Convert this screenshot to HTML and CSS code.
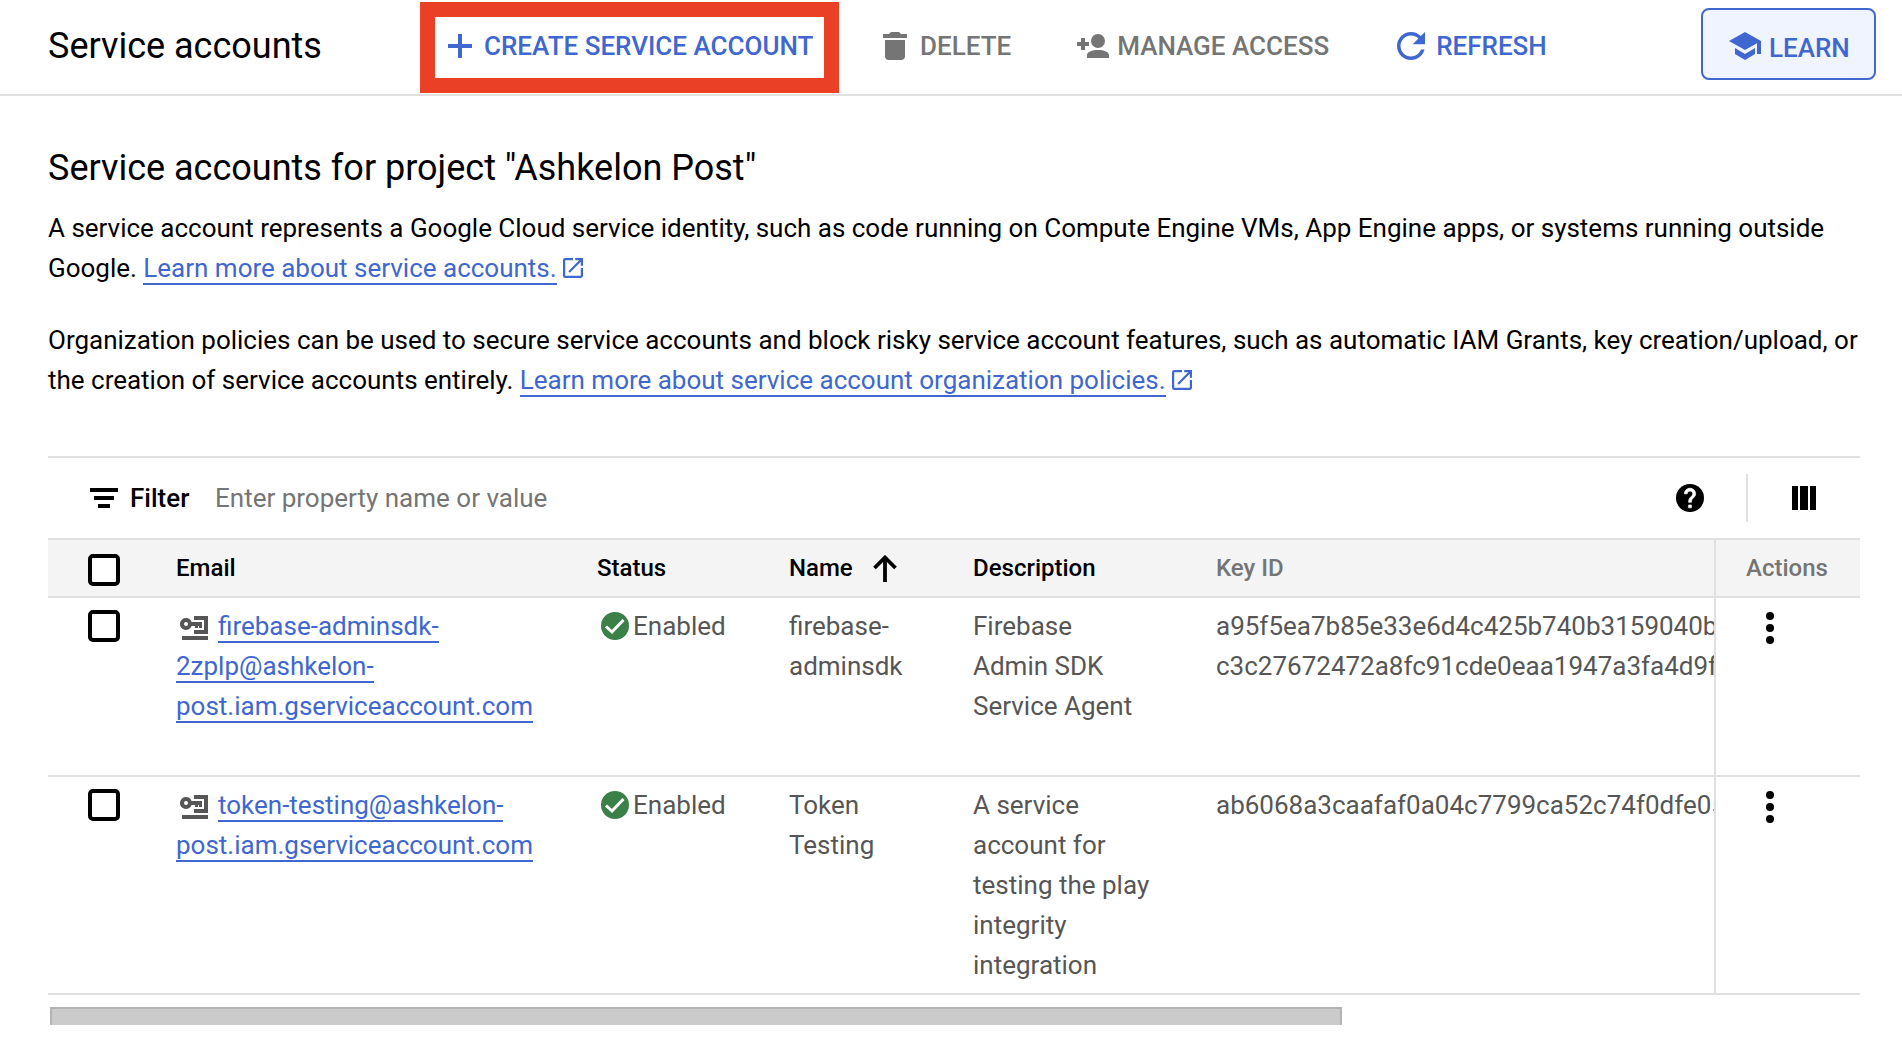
FILE: index.html
```html
<!DOCTYPE html>
<html lang="en">
<head>
<meta charset="utf-8">
<title>Service accounts</title>
<link rel="stylesheet" href="styles.css">
</head>
<body>
<svg class="defs" aria-hidden="true">
  <symbol id="open" viewBox="3 3 18 18"><path d="M19 19H5V5h7V3H5a2 2 0 0 0-2 2v14a2 2 0 0 0 2 2h14c1.100 0 2-.9 2-2v-7h-2v7zM14 3v2h3.590l-9.830 9.830 1.410 1.410L19 6.410V10h2V3h-7z"/></symbol>
  <symbol id="key" viewBox="0 0 28 24"><path d="M14 0h14v18H14v-4h10V4H14zM2 20h26v4H2z"/><path fill-rule="evenodd" d="M6 2a6 6 0 0 1 5.600 4H22v6h-3v-2h-1v2h-3v-2h-3.400A6 6 0 1 1 6 2zm0 4a2 2 0 1 0 0 4 2 2 0 0 0 0-4z"/></symbol>
  <symbol id="ok" viewBox="0 0 28 28"><circle cx="14" cy="14" r="14"/><path d="M5 14.500l6 5.500L22.500 8" fill="none" stroke="#fff" stroke-width="3"/></symbol>
  <symbol id="more" viewBox="0 0 8 32"><circle cx="4" cy="4" r="4"/><circle cx="4" cy="16" r="4"/><circle cx="4" cy="28" r="4"/></symbol>
</svg>

<header class="toolbar">
  <h1 class="title">Service accounts</h1>
  <button class="action create">
    <svg width="24" height="24" viewBox="0 0 24 24"><path d="M10 0h4v10h10v4H14v10h-4V14H0v-4h10z"/></svg>CREATE SERVICE ACCOUNT
  </button>
  <button class="action delete disabled">
    <svg width="24" height="28" viewBox="0 0 24 28"><path d="M0 2h6l2-2h8l2 2h6v4H0zM2 8h20v16a4 4 0 0 1-4 4H6a4 4 0 0 1-4-4z"/></svg>DELETE
  </button>
  <button class="action manage disabled">
    <svg width="32" height="24" viewBox="0 0 32 24"><path d="M4 4h4v4h4v4H8v4H4v-4H0V8h4zM10 24v-3c0-3 5-5 11-5s11 2 11 5v3z"/><circle cx="21" cy="7" r="7"/></svg>MANAGE ACCESS
  </button>
  <button class="action refresh">
    <svg width="28" height="28" viewBox="4 4 16 16"><path d="M17.650 6.350C16.200 4.900 14.210 4 12 4c-4.420 0-7.990 3.580-7.990 8s3.570 8 7.990 8c3.730 0 6.840-2.550 7.730-6h-2.080c-.82 2.330-3.040 4-5.650 4-3.310 0-6-2.690-6-6s2.690-6 6-6c1.660 0 3.140.69 4.220 1.780L13 11h7V4l-2.350 2.350z"/></svg>REFRESH
  </button>
  <button class="action learn">
    <svg width="32" height="28" viewBox="0 0 32 28"><path d="M16 0l16 9v13h-4V11.300L16 18 0 9zM6 16l10 6 10-6v6l-10 6-10-6z"/></svg>LEARN
  </button>
</header>

<main class="content">
  <h2 class="heading">Service accounts for project "Ashkelon Post"</h2>
  <p class="text">A service account represents a Google Cloud service identity, such as code running on Compute Engine VMs, App Engine apps, or systems running outside Google. <a class="link">Learn more about service accounts.</a><svg class="open" width="20" height="20"><use href="#open"/></svg></p>
  <p class="text">Organization policies can be used to secure service accounts and block risky service account features, such as automatic IAM Grants, key creation/upload, or the creation of service accounts entirely. <a class="link">Learn more about service account organization policies.</a><svg class="open" width="20" height="20"><use href="#open"/></svg></p>

  <section class="table">
    <div class="filter">
      <svg width="28" height="20" viewBox="0 0 28 20"><path d="M0 0h28v4H0zM4 8h20v4H4zM8 16h12v4H8z"/></svg>
      <span class="filter-label">Filter</span>
      <span class="placeholder">Enter property name or value</span>
      <svg class="help" width="28" height="28" viewBox="2 2 20 20"><circle cx="12" cy="12" r="10"/><path fill="#fff" stroke="#fff" stroke-width=".5" d="M13 19h-2v-2h2v2zm2.070-7.750l-.9.92C13.450 12.900 13 13.500 13 15h-2v-.5c0-1.100.45-2.100 1.170-2.830l1.240-1.260c.37-.36.59-.86.59-1.410 0-1.100-.9-2-2-2s-2 .9-2 2H8c0-2.210 1.790-4 4-4s4 1.790 4 4c0 .88-.36 1.680-.93 2.250z"/></svg>
      <span class="divider"></span>
      <svg width="24" height="24" viewBox="0 0 24 24"><path d="M0 0h6v24H0zM8 0h8v24H8zM18 0h6v24h-6z"/></svg>
    </div>

    <div class="row head">
      <div class="cell check"><span class="box"></span></div>
      <div class="cell">Email</div>
      <div class="cell">Status</div>
      <div class="cell sorted">Name<svg width="24" height="27" viewBox="0 0 24 27"><path d="M12 27V3M1.500 13L12 2.500 22.500 13" fill="none" stroke="#000" stroke-width="3.800"/></svg></div>
      <div class="cell">Description</div>
      <div class="cell muted">Key ID</div>
      <div class="cell actions muted">Actions</div>
    </div>

    <div class="row first">
      <div class="cell check"><span class="box"></span></div>
      <div class="cell"><svg class="key" width="28" height="24"><use href="#key"/></svg><a class="link">firebase-adminsdk-<br>2zplp@ashkelon-<br>post.iam.gserviceaccount.com</a></div>
      <div class="cell"><svg class="ok" width="28" height="28"><use href="#ok"/></svg>Enabled</div>
      <div class="cell">firebase-<br>adminsdk</div>
      <div class="cell">Firebase<br>Admin SDK<br>Service Agent</div>
      <div class="cell keys">a95f5ea7b85e33e6d4c425b740b3159040b<br>c3c27672472a8fc91cde0eaa1947a3fa4d9f</div>
      <div class="cell actions"><svg class="more" width="8" height="32"><use href="#more"/></svg></div>
    </div>

    <div class="row">
      <div class="cell check"><span class="box"></span></div>
      <div class="cell"><svg class="key" width="28" height="24"><use href="#key"/></svg><a class="link">token-testing@ashkelon-<br>post.iam.gserviceaccount.com</a></div>
      <div class="cell"><svg class="ok" width="28" height="28"><use href="#ok"/></svg>Enabled</div>
      <div class="cell">Token<br>Testing</div>
      <div class="cell">A service<br>account for<br>testing the play<br>integrity<br>integration</div>
      <div class="cell keys">ab6068a3caafaf0a04c7799ca52c74f0dfe05</div>
      <div class="cell actions"><svg class="more" width="8" height="32"><use href="#more"/></svg></div>
    </div>
  </section>
  <div class="scrollbar"></div>
</main>
</body>
</html>
```
FILE: styles.css
```css
* { box-sizing: border-box; }

body {
  margin: 0;
  background: #fff;
  color: #000;
  font: 400 26px/40px Roboto, sans-serif;
  overflow: hidden;
}

h1, h2, p { margin: 0; font-weight: 400; }
svg { flex: none; }
.defs { display: none; }

/* Toolbar */
.toolbar {
  display: flex;
  align-items: center;
  height: 96px;
  padding: 0 26px 2px 48px;
  border-bottom: 2px solid #e0e0e0;
}
.title { width: 372px; font-size: 36px; line-height: 48px; }
.action {
  display: flex;
  flex: none;
  align-items: center;
  padding: 0;
  border: 0;
  background: none;
  color: #4067d0;
  font: 500 26px/40px Roboto, sans-serif;
  white-space: nowrap;
}
.action svg { fill: currentColor; }
.disabled { color: #757575; }
.create {
  gap: 12px;
  width: 419px;
  height: 91px;
  margin-top: 3px;
  padding: 0 0 3px 13px;
  border: 15px solid #ea4026;
}
.delete { gap: 13px; margin-left: 44px; }
.manage { gap: 8px; margin-left: 66px; }
.refresh { gap: 11px; margin-left: 68px; }
.learn {
  gap: 8px;
  width: 175px;
  height: 72px;
  margin: -4px 0 0 auto;
  padding: 7px 0 0 26px;
  border: 2px solid #4067d0;
  border-radius: 8px;
  background: #f0f4fe;
}
.learn svg { margin-top: -3px; }

/* Page text */
.content { padding: 48px 42px 0 48px; }
.heading { margin-bottom: 16px; font-size: 36px; line-height: 48px; }
.text { width: 1812px; height: 80px; margin-bottom: 32px; letter-spacing: -0.007px; }
.link { color: #4067d0; border-bottom: 2px solid #4067d0; }
.open { margin-left: 6px; vertical-align: -1px; fill: #4067d0; }

/* Table */
.table { margin-top: 56px; border-top: 2px solid #e0e0e0; }
.filter {
  display: flex;
  align-items: center;
  height: 80px;
  padding: 0 44px 0 42px;
}
.filter-label { width: 85px; margin-left: 12px; font-weight: 500; }
.placeholder { color: #757575; }
.help { margin-left: auto; }
.divider { width: 2px; height: 48px; margin: 0 44px 0 42px; background: #e0e0e0; }

.row {
  display: grid;
  grid-template-columns: 128px 421px 192px 184px 243px 498px 146px;
  border-bottom: 2px solid #e0e0e0;
  color: #565656;
}
.row.first { height: 179px; }
.cell { min-width: 0; padding: 8px 0; }
.check { padding: 12px 0 0 40px; }
.box {
  display: block;
  width: 32px;
  height: 32px;
  border: 4px solid #000;
  border-radius: 5px;
  background: #fff;
}
.keys { overflow: hidden; white-space: nowrap; }
.actions { padding-left: 50px; border-left: 2px solid #e0e0e0; }
.key { margin: 0 10px 0 4px; vertical-align: -5px; fill: #565656; }
.ok { margin: 0 4px 0 4px; vertical-align: -5px; fill: #3a8048; }
.more { display: block; margin-top: 6px; fill: #000; }

.head {
  height: 60px;
  border-top: 2px solid #e0e0e0;
  background: #f4f4f4;
  color: #000;
  font-size: 24px;
  font-weight: 500;
}
.head .check { padding-top: 14px; }
.head .actions { padding-left: 30px; }
.sorted { display: flex; align-items: center; gap: 20px; }
.muted { color: #757575; }

.scrollbar {
  width: 1292px;
  height: 18px;
  margin: 12px 0 0 2px;
  border: 2px solid #b4b4b4;
  border-bottom: 0;
  background: #cbcbcb;
}
```
